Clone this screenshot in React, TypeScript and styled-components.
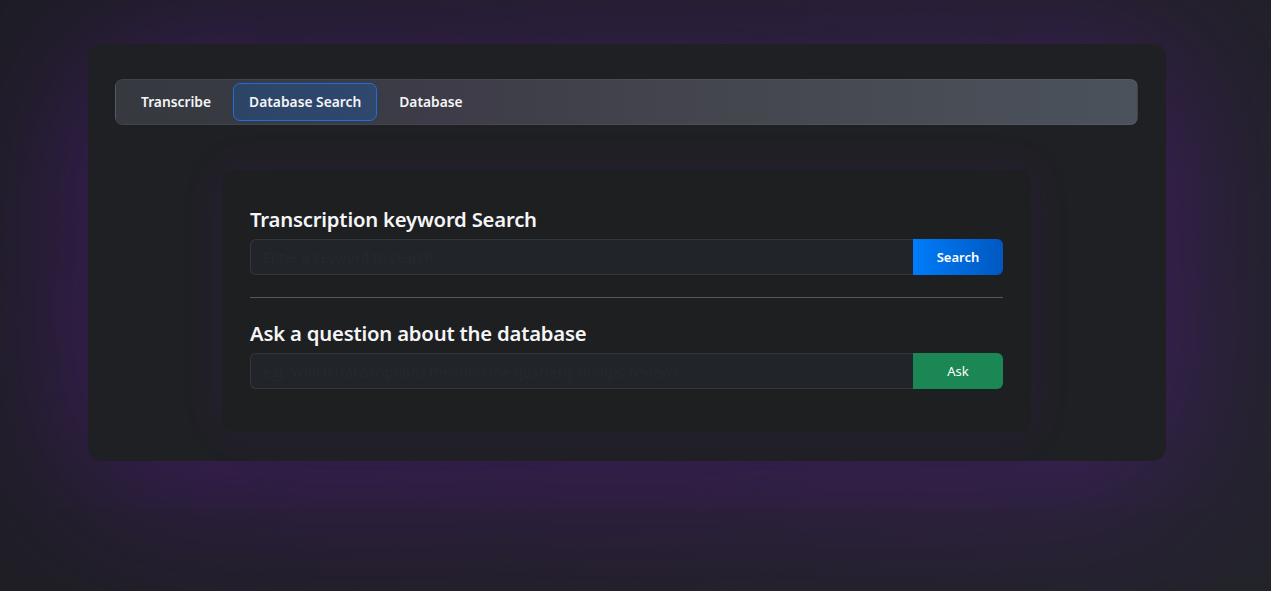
import React from "react";
import styled, { createGlobalStyle } from "styled-components";

const GlobalStyle = createGlobalStyle`
  html, body {
    margin: 0;
    padding: 0;
    height: 100%;
  }
  body {
    background: linear-gradient(135deg, #1c1d21 0%, #202026 55%, #23242a 100%);
    font-family: "Noto Sans", "Open Sans", sans-serif;
    color: #f1f1f3;
    overflow: hidden;
  }
  #root { min-height: 100%; }
`;

const Page = styled.div`
  min-height: 591px;
  padding: 44px 0 0 88px;
  box-sizing: border-box;
`;

const Container = styled.div`
  width: 1078px;
  box-sizing: border-box;
  padding: 35px 28px 29px 27px;
  background: #1f2024;
  border-radius: 14px;
  box-shadow: 0 18px 170px 10px rgba(100, 28, 170, 0.48);
`;

const NavBar = styled.nav`
  display: flex;
  align-items: center;
  gap: 6px;
  height: 46px;
  box-sizing: border-box;
  padding: 0 9px;
  border-radius: 8px;
  border: 1px solid rgba(255, 255, 255, 0.05);
  background: linear-gradient(90deg, #363940 0%, #3d3c48 32%, #45474f 62%, #4b525c 100%);
`;

const Tab = styled.button<{ $active?: boolean }>`
  height: 38px;
  padding: 0 15px;
  border-radius: 7px;
  border: 1px solid ${(p) => (p.$active ? "#1d6fe0" : "transparent")};
  background: ${(p) => (p.$active ? "linear-gradient(90deg, #2c4567, #30476e)" : "transparent")};
  color: #f4f5f7;
  font-family: "Noto Sans", sans-serif;
  font-weight: 600;
  font-size: 13.8px;
  line-height: 36px;
  cursor: pointer;
`;

const Card = styled.section`
  width: 809px;
  margin: 45px auto 0;
  box-sizing: border-box;
  padding: 35px 28px 43px;
  background: #1d1f21;
  border-radius: 14px;
  box-shadow: 0 0 40px rgba(100, 28, 170, 0.14);
`;

const Heading = styled.h2`
  margin: 0 0 5px;
  font-size: 20.3px;
  font-weight: 600;
  line-height: 29px;
  color: #f5f5f7;
  letter-spacing: -0.2px;
`;

const InputRow = styled.div`
  display: flex;
  height: 36px;
`;

const TextInput = styled.input`
  flex: 1;
  min-width: 0;
  box-sizing: border-box;
  height: 100%;
  padding: 0 12px;
  background: #212428;
  border: 1px solid #33363b;
  border-right: none;
  border-radius: 6px 0 0 6px;
  color: #e8e8ea;
  font-family: "Noto Sans", sans-serif;
  font-size: 14px;
  outline: none;
  &::placeholder {
    color: #27292e;
  }
`;

const ActionButton = styled.button<{ $variant: "primary" | "success" }>`
  width: 90px;
  height: 100%;
  border: none;
  border-radius: 0 6px 6px 0;
  background: ${(p) =>
    p.$variant === "primary"
      ? "linear-gradient(90deg, #007cfa 0%, #0058c0 100%)"
      : "#1a8754"};
  color: #ffffff;
  font-family: "Noto Sans", sans-serif;
  font-size: 13px;
  font-weight: ${(p) => (p.$variant === "primary" ? 600 : 400)};
  cursor: pointer;
`;

const Divider = styled.hr`
  margin: 22px 0 21px;
  border: none;
  border-top: 1px solid #55585d;
`;

export default function App() {
  return (
    <>
      <GlobalStyle />
      <Page>
        <Container>
          <NavBar>
            <Tab>Transcribe</Tab>
            <Tab $active>Database Search</Tab>
            <Tab>Database</Tab>
          </NavBar>
          <Card>
            <Heading>Transcription keyword Search</Heading>
            <InputRow>
              <TextInput placeholder="Enter a keyword to search..." />
              <ActionButton $variant="primary">Search</ActionButton>
            </InputRow>
            <Divider />
            <Heading>Ask a question about the database</Heading>
            <InputRow>
              <TextInput placeholder="e.g. Which transcriptions mention the quarterly budget review?" />
              <ActionButton $variant="success">Ask</ActionButton>
            </InputRow>
          </Card>
        </Container>
      </Page>
    </>
  );
}
